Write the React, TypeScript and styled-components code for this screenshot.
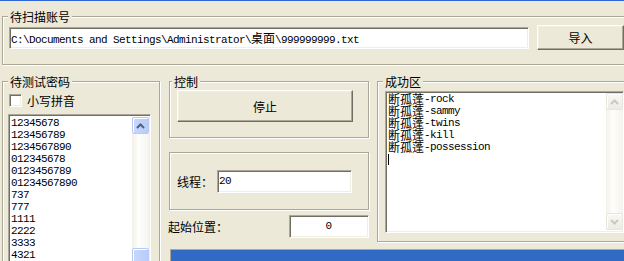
import styled, { createGlobalStyle } from "styled-components";

const GlobalStyle = createGlobalStyle`
  html, body {
    margin: 0;
    padding: 0;
    background: #ece9d8;
    overflow: hidden;
  }
  body {
    font-family: "Noto Sans CJK SC", "Liberation Sans", sans-serif;
    font-size: 12px;
    color: #000;
  }
`;

const passwords = [
  "12345678",
  "123456789",
  "1234567890",
  "012345678",
  "0123456789",
  "01234567890",
  "737",
  "777",
  "1111",
  "2222",
  "3333",
  "4321",
  "5555",
];

const results = ["rock", "sammy", "twins", "kill", "possession"];

const Chevron = ({ down, color }: { down?: boolean; color: string }) => (
  <svg width="9" height="6" viewBox="0 0 9 6">
    <polyline
      points={down ? "1,1 4.5,4.5 8,1" : "1,5 4.5,1.5 8,5"}
      fill="none"
      stroke={color}
      strokeWidth="2"
    />
  </svg>
);

const App = () => {
  return (
    <>
      <GlobalStyle />
      <Window>
        <TitleEdge />

        {/* 待扫描账号 */}
        <Group $width={630} $top={9}>
          <Legend $indent={5}>待扫描账号</Legend>
          <TopRow>
            <PathInput>
              C:\Documents and Settings\Administrator\<Cjk>桌面</Cjk>\999999999.txt
            </PathInput>
            <PushButton $width={87} $height={25}>
              导入
            </PushButton>
          </TopRow>
        </Group>

        <Lower>
          {/* 待测试密码 */}
          <Group $width={158} $top={0}>
            <Legend $indent={5}>待测试密码</Legend>
            <CheckRow>
              <CheckBox />
              <span>小写拼音</span>
            </CheckRow>
            <ListBox>
              <ListLines>
                {passwords.map((p) => (
                  <Line key={p}>{p}</Line>
                ))}
              </ListLines>
              <ScrollBar>
                <ScrollButton>
                  <Chevron color="#4d6185" />
                </ScrollButton>
                <ScrollTrack $height={114} />
                <ScrollButton />
              </ScrollBar>
            </ListBox>
          </Group>

          <MainArea>
            <MainRow>
              <MiddleCol>
                {/* 控制 */}
                <Group $width={200} $top={0}>
                  <Legend $indent={2}>控制</Legend>
                  <ControlBody>
                    <PushButton $width={176} $height={32}>
                      停止
                    </PushButton>
                  </ControlBody>
                </Group>

                <Group $width={200} $top={14}>
                  <ThreadBody>
                    <span>线程：</span>
                    <Field $width={135} $align="left">
                      20
                    </Field>
                  </ThreadBody>
                </Group>

                <StartRow>
                  <span>起始位置：</span>
                  <Field $width={80} $align="center">
                    0
                  </Field>
                </StartRow>
              </MiddleCol>

              {/* 成功区 */}
              <Group $width={255} $top={0}>
                <Legend $indent={5}>成功区</Legend>
                <SuccessBody>
                  <OutputBox>
                    <OutputLines>
                      {results.map((r) => (
                        <Line key={r}>
                          <LineCjk>断孤蓬</LineCjk>-{r}
                        </Line>
                      ))}
                      <Caret />
                    </OutputLines>
                    <ScrollBar $disabled>
                      <ScrollButton $disabled>
                        <Chevron color="#cbc9bd" />
                      </ScrollButton>
                      <ScrollButton $disabled>
                        <Chevron down color="#cbc9bd" />
                      </ScrollButton>
                    </ScrollBar>
                  </OutputBox>
                </SuccessBody>
              </Group>
            </MainRow>
            <Progress />
          </MainArea>
        </Lower>
      </Window>
    </>
  );
};

/** 窗口 */
const Window = styled.div`
  width: 650px;
  height: 261px;
  overflow: hidden;
  background: #ece9d8;
`;

/** 标题栏下沿 */
const TitleEdge = styled.div`
  height: 1px;
  background: #2f66d6;
`;

/** 分组框 (etched) */
const Group = styled.fieldset<{ $width: number; $top: number }>`
  box-sizing: border-box;
  width: ${(p) => p.$width}px;
  margin: ${(p) => p.$top}px 0 0 ${(p) => (p.$width === 630 ? 2 : 0)}px;
  padding: 0;
  min-width: 0;
  border: 1px solid #aca899;
  box-shadow: 1px 1px 0 #fff, inset 1px 1px 0 #fff;
  flex-shrink: 0;
`;

const Legend = styled.legend<{ $indent: number }>`
  margin-left: ${(p) => p.$indent}px;
  padding: 0 2px;
  line-height: 13px;
  font-size: 12px;
  background: #ece9d8;
`;

const Cjk = styled.span`
  font-family: "Noto Sans CJK SC", sans-serif;
  font-size: 12px;
  letter-spacing: 0;
`;

/** 成功区里的中文前缀，固定行高避免撑高行 */
const LineCjk = styled.span`
  display: inline-block;
  height: 12px;
  line-height: 12px;
  vertical-align: top;
  font-family: "Noto Sans CJK SC", sans-serif;
  font-size: 12px;
  letter-spacing: 0;
`;

const TopRow = styled.div`
  display: flex;
  align-items: center;
  gap: 8px;
  padding: 2px 0 14px 6px;
`;

/** 凹陷输入框 */
const sunken = `
  box-sizing: border-box;
  background: #fff;
  border: 1px solid;
  border-color: #aca899 #fff #fff #aca899;
  box-shadow: inset 1px 1px 0 #716f64, inset -1px -1px 0 #f1efe2;
`;

const PathInput = styled.div`
  ${sunken}
  width: 520px;
  height: 22px;
  padding-left: 1px;
  line-height: 19px;
  font-family: "Liberation Mono", monospace;
  font-size: 11px;
  letter-spacing: -0.6px;
  white-space: nowrap;
  overflow: hidden;
`;

/** 凸起按钮 */
const PushButton = styled.div<{ $width: number; $height: number }>`
  box-sizing: border-box;
  width: ${(p) => p.$width}px;
  height: ${(p) => p.$height}px;
  flex-shrink: 0;
  display: flex;
  align-items: center;
  justify-content: center;
  background: #ece9d8;
  border: 1px solid;
  border-color: #fff #716f64 #716f64 #fff;
  box-shadow: inset -1px -1px 0 #aca899, inset 1px 1px 0 #f1efe2;
  font-size: 12px;
`;

const Lower = styled.div`
  display: flex;
  gap: 9px;
  margin: 10px 0 0 2px;
  height: 200px;
  align-items: flex-start;
`;

const CheckRow = styled.div`
  display: flex;
  align-items: center;
  gap: 5px;
  height: 13px;
  padding: 6px 0 0 6px;
`;

const CheckBox = styled.div`
  ${sunken}
  width: 13px;
  height: 13px;
`;

const ListBox = styled.div`
  ${sunken}
  display: flex;
  width: 143px;
  height: 160px;
  margin: 7px 0 0 5px;
  padding: 2px 1px 0 2px;
`;

const ListLines = styled.div`
  flex: 1;
`;

const Line = styled.div`
  height: 12px;
  line-height: 12px;
  font-family: "Liberation Mono", monospace;
  font-size: 11px;
  letter-spacing: -0.6px;
  white-space: nowrap;
`;

const ScrollBar = styled.div<{ $disabled?: boolean }>`
  width: 17px;
  display: flex;
  flex-direction: column;
  justify-content: ${(p) => (p.$disabled ? "space-between" : "flex-start")};
  background: linear-gradient(to right, #f3f1ea, #fefefb 40%, #f4f3ee);
`;

const ScrollButton = styled.div<{ $disabled?: boolean }>`
  box-sizing: border-box;
  width: 17px;
  height: 17px;
  display: flex;
  align-items: center;
  justify-content: center;
  border-radius: 2px;
  border: 1px solid ${(p) => (p.$disabled ? "#e8e6dc" : "#b7c9f4")};
  background: ${(p) =>
    p.$disabled
      ? "linear-gradient(#f9f8f4, #ecebe4)"
      : "linear-gradient(to right, #c9d8fc, #b8cbf8)"};
  box-shadow: inset 1px 1px 0 #fff;
`;

const ScrollTrack = styled.div<{ $height: number }>`
  height: ${(p) => p.$height}px;
`;

const MainArea = styled.div`
  display: flex;
  flex-direction: column;
  width: 481px;
`;

const MainRow = styled.div`
  display: flex;
  gap: 8px;
  align-items: flex-start;
`;

const MiddleCol = styled.div`
  display: flex;
  flex-direction: column;
  width: 200px;
`;

const ControlBody = styled.div`
  padding: 2px 0 15px 7px;
`;

const ThreadBody = styled.div`
  display: flex;
  align-items: center;
  gap: 4px;
  padding: 17px 0 16px 7px;
`;

const Field = styled.div<{ $width: number; $align: string }>`
  ${sunken}
  width: ${(p) => p.$width}px;
  height: 23px;
  padding: 0 2px 0 1px;
  line-height: 21px;
  text-align: ${(p) => p.$align};
  font-family: "Liberation Mono", monospace;
  font-size: 11px;
  letter-spacing: -0.6px;
`;

const StartRow = styled.div`
  display: flex;
  align-items: center;
  justify-content: space-between;
  width: 201px;
  margin: 5px 0 0 -1px;
`;

const SuccessBody = styled.div`
  padding: 3px 0 8px 7px;
`;

const OutputBox = styled.div`
  ${sunken}
  display: flex;
  width: 239px;
  height: 142px;
  padding: 1px 0 2px 2px;
`;

const OutputLines = styled.div`
  flex: 1;
`;

const Caret = styled.div`
  width: 1px;
  height: 11px;
  margin-top: 1px;
  background: #000;
`;

const Progress = styled.div`
  height: 20px;
  margin: 7px 0 0 1px;
  border-top: 1px solid #aca899;
  border-left: 1px solid #aca899;
  background: #316ac5;
`;

export default App;
